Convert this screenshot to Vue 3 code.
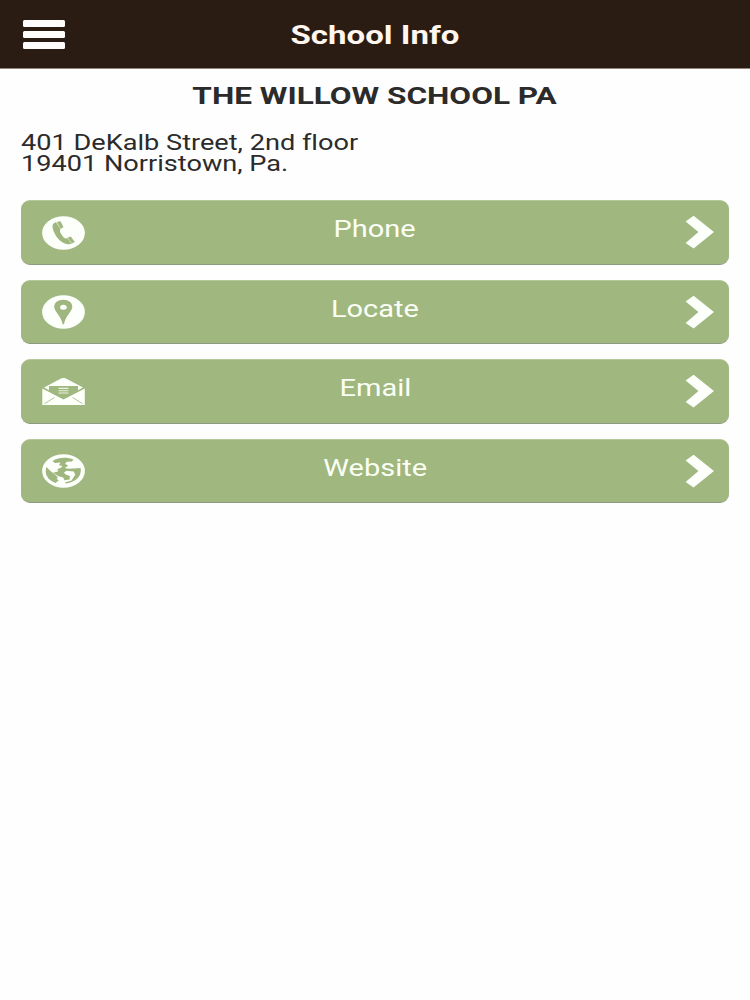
<script setup>
const school = {
  name: 'THE WILLOW SCHOOL PA',
  street: '401 DeKalb Street, 2nd floor',
  city: '19401 Norristown, Pa.',
}

const actions = [
  { id: 'phone', label: 'Phone' },
  { id: 'locate', label: 'Locate' },
  { id: 'email', label: 'Email' },
  { id: 'website', label: 'Website' },
]
</script>

<template>
  <div class="page">
    <header class="topbar">
      <button class="menu" aria-label="Menu">
        <span></span>
        <span></span>
        <span></span>
      </button>
      <h1><span class="wide">School Info</span></h1>
    </header>

    <main class="content">
      <h2><span class="wide">{{ school.name }}</span></h2>
      <p class="address">
        <span class="wide">{{ school.street }}</span>
        <span class="wide">{{ school.city }}</span>
      </p>

      <nav class="actions">
        <a v-for="action in actions" :key="action.id" class="action">
          <svg class="icon" viewBox="0 0 43 34">
            <g v-if="action.id === 'phone'">
              <ellipse cx="21.5" cy="17" rx="21.4" ry="16.7" fill="#fdfffa" />
              <path
                d="M14 6.2 C10.5 7 9.8 9.5 11.2 14 C13.2 20.2 18 26.5 24.5 28 C26.8 28.5 28.5 28.3 29.3 27.8 L25.2 21.9 C23.6 23 22.2 22.3 20.4 19.8 C18.3 16.9 17.3 14.6 18.3 12.9 Z"
                fill="#9fb77f"
              />
              <path d="M14.6 6 L18.5 5.3 L21.5 11.2 L18 12.9 Z M25.2 21.7 L28.8 20.4 L32.8 26.1 L29.3 27.8 Z" fill="#9fb77f" />
              <path d="M15 6.4 L18.6 12.4 M25.8 21.8 L29.8 27.4" stroke="#d3dfc3" stroke-width="0.6" />
            </g>
            <g v-else-if="action.id === 'locate'">
              <ellipse cx="21.5" cy="17" rx="21.4" ry="16.7" fill="#fdfffa" />
              <path
                d="M21.3 4.8 C15.8 4.8 12.2 7.8 12.2 12 C12.2 16.3 18.8 20.4 20.6 29 Q21.3 29.8 22 29 C23.6 20.4 30.3 16.3 30.3 12 C30.3 7.8 26.8 4.8 21.3 4.8 Z"
                fill="#9fb77f"
              />
              <ellipse cx="21.4" cy="12.2" rx="3.3" ry="2.5" fill="#fdfffa" />
            </g>
            <g v-else-if="action.id === 'email'">
              <path d="M2 12.5 L19.5 3.3 Q21.5 2.5 23.5 3.3 L41 12.5 L36 15.2 L36 11 L7 11 L7 15.2 Z" fill="#fdfffa" />
              <path d="M0.3 13.6 L21.5 24.5 L42.8 13.6 V30 H0.3 Z" fill="#fdfffa" />
              <path d="M2.5 28.6 L12.5 22.5 M40.5 28.6 L30.5 22.5" stroke="#9fb77f" stroke-width="0.8" />
              <path d="M16.6 13.4 H26.4 M16.6 15.7 H26.4 M16.6 18 H26.4" stroke="#e9f2dc" stroke-width="1.1" />
            </g>
            <g v-else>
              <ellipse cx="21.5" cy="17" rx="21.4" ry="16.7" fill="#fdfffa" />
              <path
                d="M10.5 7 C14 4.6 18 3.8 22 3.8 C26 3.8 29 4.4 31.5 5.6 L30 7.4 L24.6 7.8 L23.2 9.8 L26.2 11.8 L22.8 14 L26.5 14.8 L38.6 14 Q39.4 17.5 38 20.8 C36 25 31.5 28.4 24 29.6 L23 28.6 L29.5 26.4 L33.2 20.8 L31.8 17.6 L24.5 16.8 L22 18.6 L23.5 20.6 L28 22 L27.6 25.4 L22.5 26.2 L21.2 23.4 L16.5 22.2 L11 18.8 L16 17.6 L15.4 15.2 L19.2 13.4 L20.4 12 L17 11.2 L18.4 8.6 L12.8 9 Z"
                fill="#9fb77f"
              />
              <path d="M4.4 13 L8.8 17.2 L13 20.4 L15.8 23.2 L14.8 25 L16.8 26.6 L13.4 29 C7.8 27 3.9 22.8 3.7 17.6 Q3.7 15 4.4 13 Z" fill="#9fb77f" />
            </g>
          </svg>
          <span class="label"><span class="wide">{{ action.label }}</span></span>
          <svg class="chevron" viewBox="0 0 29 34">
            <path d="M0.6 6.4 L8.6 0.8 L29 17.1 L8.6 33.4 L0.6 27.9 L13.4 17.1 Z" fill="#fdfffa" />
          </svg>
        </a>
      </nav>
    </main>
  </div>
</template>

<style>
html,
body {
  margin: 0;
  background: #fefefe;
}
</style>

<style scoped>
.page {
  min-height: 1000px;
  background: #fefefe;
  color: #2b2b2b;
  font-family: Roboto, "Liberation Sans", sans-serif;
  font-variant-ligatures: none;
}

/* extended lettering */
.wide {
  display: inline-block;
  transform: scaleX(1.32);
  white-space: nowrap;
}

.topbar {
  display: grid;
  grid-template-columns: 42px 1fr 42px;
  align-items: center;
  height: 69px;
  padding: 0 23px;
  background: #2a1c13;
  border-bottom: 1px solid #8f857d;
  box-sizing: border-box;
}

.menu {
  display: flex;
  flex-direction: column;
  gap: 4px;
  padding: 1px 0 0;
  border: 0;
  background: none;
}

.menu span {
  height: 7px;
  border-radius: 1.5px;
  background: #fffdfb;
}

h1 {
  margin: 0;
  padding-top: 3px;
  text-align: center;
  font-size: 25px;
  line-height: 30px;
  font-weight: 700;
  color: #fff6ef;
}

.content {
  padding: 0 21px;
}

h2 {
  margin: 0;
  padding-top: 12px;
  text-align: center;
  font-size: 24px;
  line-height: 30px;
  font-weight: 700;
}

h2 .wide {
  transform: scaleX(1.315);
}

.address {
  display: flex;
  flex-direction: column;
  align-items: flex-start;
  margin: 21px 0 26px;
  font-size: 21.5px;
  line-height: 21px;
}

.address .wide {
  transform: scaleX(1.262);
  transform-origin: left;
}

.actions {
  display: flex;
  flex-direction: column;
  gap: 15px;
}

.action {
  display: flex;
  align-items: center;
  height: 64.5px;
  padding: 0 15px 0 21px;
  box-sizing: border-box;
  border-top: 1.5px solid #b4c898;
  border-bottom: 1.5px solid #8e9a80;
  border-radius: 9px;
  background: #a0b77f;
}

.icon {
  width: 43px;
  height: 34px;
  margin-top: 1px;
}

.label {
  flex: 1;
  padding: 0 20px 4px 0;
  text-align: center;
  font-size: 23px;
  line-height: 28px;
  color: #fbfff5;
}

.label .wide {
  transform: scaleX(1.26);
}

.chevron {
  width: 29px;
  height: 34px;
}
</style>
